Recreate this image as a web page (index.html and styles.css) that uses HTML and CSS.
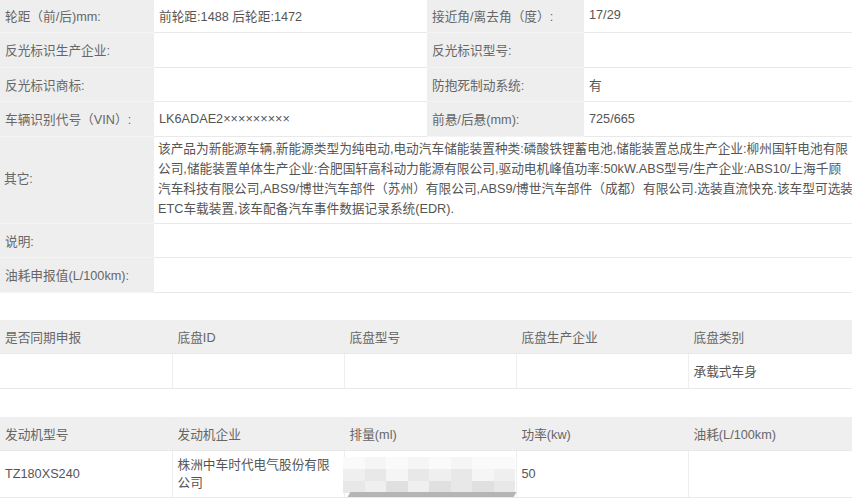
FILE: index.html
```html
<!DOCTYPE html>
<html lang="zh-CN">
<head>
    <meta charset="utf-8">
    <title>车辆参数</title>
    <link rel="stylesheet" href="styles.css">
</head>
<body>
    <div class="page">
        <!-- 基本参数 -->
        <table class="params">
            <colgroup>
                <col class="c-label"><col class="c-value"><col class="c-label2"><col class="c-value2">
            </colgroup>
            <tr>
                <td class="label">轮距（前/后)mm:</td>
                <td>前轮距:1488 后轮距:1472</td>
                <td class="label">接近角/离去角（度）:</td>
                <td>17/29</td>
            </tr>
            <tr>
                <td class="label">反光标识生产企业:</td>
                <td></td>
                <td class="label">反光标识型号:</td>
                <td></td>
            </tr>
            <tr>
                <td class="label">反光标识商标:</td>
                <td></td>
                <td class="label">防抱死制动系统:</td>
                <td>有</td>
            </tr>
            <tr>
                <td class="label">车辆识别代号（VIN）:</td>
                <td>LK6ADAE2×××××××××</td>
                <td class="label">前悬/后悬(mm):</td>
                <td>725/665</td>
            </tr>
            <tr class="long">
                <td class="label">其它:</td>
                <td colspan="3">该产品为新能源车辆,新能源类型为纯电动,电动汽车储能装置种类:磷酸铁锂蓄电池,储能装置总成生产企业:柳州国轩电池有限<br>公司,储能装置单体生产企业:合肥国轩高科动力能源有限公司,驱动电机峰值功率:50kW.ABS型号/生产企业:ABS10/上海千顾<br>汽车科技有限公司,ABS9/博世汽车部件（苏州）有限公司,ABS9/博世汽车部件（成都）有限公司.选装直流快充.该车型可选装<br>ETC车载装置,该车配备汽车事件数据记录系统(EDR).</td>
            </tr>
            <tr>
                <td class="label">说明:</td>
                <td colspan="3"></td>
            </tr>
            <tr>
                <td class="label">油耗申报值(L/100km):</td>
                <td colspan="3"></td>
            </tr>
        </table>

        <!-- 底盘 -->
        <table class="grid">
            <tr class="head">
                <td>是否同期申报</td>
                <td>底盘ID</td>
                <td>底盘型号</td>
                <td>底盘生产企业</td>
                <td>底盘类别</td>
            </tr>
            <tr>
                <td></td>
                <td></td>
                <td></td>
                <td></td>
                <td>承载式车身</td>
            </tr>
        </table>

        <!-- 发动机 -->
        <table class="grid engine">
            <tr class="head">
                <td>发动机型号</td>
                <td>发动机企业</td>
                <td>排量(ml)</td>
                <td>功率(kw)</td>
                <td>油耗(L/100km)</td>
            </tr>
            <tr class="tall">
                <td>TZ180XS240</td>
                <td>株洲中车时代电气股份有限公司</td>
                <td></td>
                <td>50</td>
                <td></td>
            </tr>
        </table>

        <!-- 水印马赛克 -->
        <div class="mosaic">
            <span class="m0"></span><span class="m1"></span><span class="m0"></span><span class="m1"></span><span class="m0"></span><span class="m1"></span><span class="m0"></span><span class="m0"></span>
            <span class="m2"></span><span class="m3"></span><span class="m1"></span><span class="m3"></span><span class="m2"></span><span class="m3"></span><span class="m1"></span><span class="m2"></span>
            <span class="m3"></span><span class="m2"></span><span class="m4"></span><span class="m2"></span><span class="m4"></span><span class="m3"></span><span class="m4"></span><span class="m3"></span>
            <div class="band"></div>
        </div>
    </div>
</body>
</html>
```

FILE: styles.css
```css
body {
    margin: 0;
    background: #fff;
    font-family: "Liberation Sans", "Noto Sans CJK SC", sans-serif;
    font-size: 12.7px;
    color: #555;
    overflow: hidden;
}
.page {
    position: relative;
    width: 860px;
}
table {
    width: 860px;
    border-collapse: collapse;
    table-layout: fixed;
}
td {
    height: 33.5px;
    padding: 0 5px;
    border-bottom: 1px solid #e9e9e9;
    white-space: nowrap;
    vertical-align: middle;
}
.params {
    margin-top: -1.5px;
}
.c-label { width: 154px; }
.c-value { width: 273px; }
.c-label2 { width: 157px; }
.c-value2 { width: 276px; }
.params .label {
    background: #eeeeee;
    color: #666;
    border-bottom-color: #f4f4f4;
}
.params .long td {
    height: 80px;
    line-height: 20.3px;
    padding: 2px 4px 3px 4px;
}
.grid {
    margin-top: 27px;
}
.grid.engine {
    margin-top: 28px;
}
.grid td {
    border-left: 1px solid #eeeeee;
    white-space: normal;
}
.grid td:first-child {
    border-left: none;
}
.grid .head td {
    background: #efefef;
    color: #666;
    border-bottom-color: #e9e9e9;
}
.grid .tall td {
    height: 46px;
    line-height: 18px;
}

/* blurred watermark over the engine row */
.mosaic {
    position: absolute;
    left: 343px;
    top: 458px;
    width: 172px;
    height: 40px;
    display: grid;
    grid-template-columns: repeat(8, 1fr);
    grid-auto-rows: 12px;
}
.mosaic span { display: block; }
.m0 { background: #fafafa; }
.m1 { background: #f5f5f5; }
.m2 { background: #efefef; }
.m3 { background: #e8e8e8; }
.m4 { background: #e0e0e0; }
.band {
    position: absolute;
    left: 6px;
    right: 0;
    bottom: 0;
    height: 5px;
    background: #b5b5b5;
    transform: skewX(-30deg);
}
```
